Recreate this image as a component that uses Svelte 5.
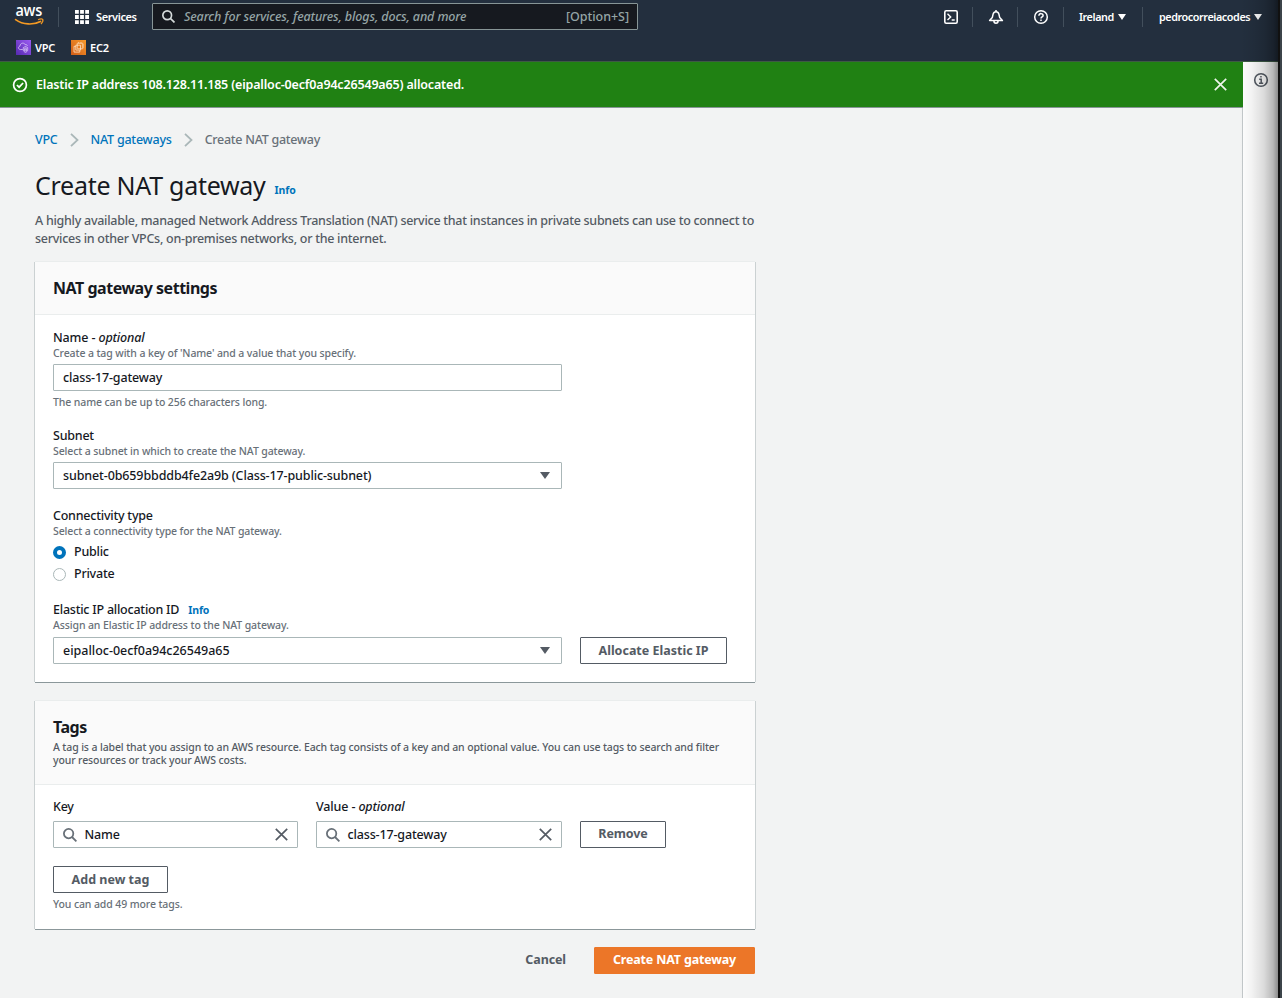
<script>
  let name = $state('class-17-gateway');
  let connectivity = $state('Public');
  const tags = [
    { id: 'key', label: 'Key', optional: false, value: 'Name' },
    { id: 'value', label: 'Value', optional: true, value: 'class-17-gateway' }
  ];
</script>

{#snippet magnifier(size)}
  <svg width={size} height={size} viewBox="0 0 14 14" fill="none" stroke="currentColor" stroke-width="1.8"><circle cx="5.6" cy="5.6" r="4.7" /><path d="M9 9 13.4 13.4" /></svg>
{/snippet}

{#snippet cross()}
  <svg width="13" height="13" viewBox="0 0 13 13" fill="none" stroke="currentColor" stroke-width="1.7"><path d="M.8.8 12.2 12.2M12.2.8.8 12.2" /></svg>
{/snippet}

<div class="page">
  <header>
    <div class="bar">
      <svg class="aws" width="30" height="22" viewBox="0 0 30 22">
        <text x="0.4" y="10.4" textLength="26.6" lengthAdjust="spacingAndGlyphs">aws</text>
        <path d="M.6 13.6C8 19 18.500 19.200 25.500 15.400" fill="none" stroke="#f59a23" stroke-width="1.700" stroke-linecap="round" />
        <path d="M23 13.700c2-.8 4-.9 4.700-.3.500.900-.2 3-1.700 4.600" fill="none" stroke="#f59a23" stroke-width="1.200" />
      </svg>
      <i class="sep first"></i>
      <svg class="grid" width="14" height="14" viewBox="0 0 14 14" fill="#fff"><path d="M0 0h3.800v3.800H0zM5.100 0h3.800v3.800H5.100zM10.200 0H14v3.800h-3.800zM0 5.100h3.800v3.800H0zM5.100 5.100h3.800v3.800H5.100zM10.200 5.100H14v3.800h-3.800zM0 10.200h3.800V14H0zM5.100 10.200h3.800V14H5.100zM10.200 10.200H14V14h-3.800z" /></svg>
      <b class="services">Services</b>
      <div class="search">
        {@render magnifier(13)}
        <em>Search for services, features, blogs, docs, and more</em>
        <span>[Option+S]</span>
      </div>
      <div class="tools">
        <svg width="16" height="16" viewBox="0 0 16 16" fill="none" stroke="#fff" stroke-width="1.600"><rect x="1.800" y="1.800" width="12.400" height="12.400" rx="1.400" /><path d="m4.500 4.700 3.200 3.200-3.200 3.200M8.700 11h3" stroke-width="1.400" /></svg>
        <i class="sep s1"></i>
        <svg width="16" height="16" viewBox="0 0 16 16" fill="none" stroke="#fff" stroke-width="1.500" stroke-linejoin="round"><path d="M1.600 11.600 4.300 8.600 5.100 5.200C5.500 3.500 6.500 2.700 8 2.700s2.500.8 2.900 2.500l.8 3.400 2.700 3zM8 2.700V.9M5.900 11.800c0 3.300 4.200 3.300 4.200 0" /></svg>
        <i class="sep s2"></i>
        <svg width="16" height="16" viewBox="0 0 16 16" fill="none" stroke="#fff" stroke-width="1.500"><circle cx="8" cy="8" r="6.300" /><path d="M5.900 6.700c0-2.900 4.300-2.600 4.200-.1C10 8 8 7.900 8 9.600M8 10.600v1.500" /></svg>
        <i class="sep s3"></i>
        <b class="region">Ireland</b><i class="caret"></i>
        <i class="sep s4"></i>
        <b class="user">pedrocorreiacodes</b><i class="caret"></i>
      </div>
    </div>
    <nav class="favorites">
      <svg width="15" height="15" viewBox="0 0 15 15"><defs><linearGradient id="violet" x1="0" y1="1" x2="1" y2="0"><stop stop-color="#5529b0" /><stop offset="1" stop-color="#9d5cf2" /></linearGradient></defs><path fill="url(#violet)" d="M0 0h15v15H0z" /><g fill="none" stroke="#e4d5fa" stroke-width=".7"><path d="M6.800 9.500H4.300C1.800 9.200 2 6.400 4 6.200c-.1-3.600 4.500-3.900 5.200-1.500 1.300-.4 2.100.2 2.100 1.300" /><path d="M7.300 7.600 9.500 6.500l2.200 1.100v2.200c0 1.300-.9 2-2.200 2.600-1.300-.6-2.200-1.300-2.200-2.600z" /><path d="M8.700 9.200V8.500q.8-1 1.600 0v.7M8.400 9.200h2.200v1.600H8.400z" /></g></svg>
      <b>VPC</b>
      <svg class="ec2" width="15" height="15" viewBox="0 0 15 15"><defs><linearGradient id="amber" x1="0" y1="1" x2="1" y2="0"><stop stop-color="#d05c17" /><stop offset="1" stop-color="#f89a2b" /></linearGradient></defs><path fill="url(#amber)" d="M0 0h15v15H0z" /><g fill="none" stroke="#ffe2c4" stroke-width=".8"><rect x="6.200" y="3.200" width="5.600" height="5.600" rx=".5" /><path d="M4.800 6.300H3v5.800h5.800v-1.800M4.800 5.200h4.700v4.900H4.800zM7.500 3.200V2.300M10 3.200V2.300M11.800 5h.9M11.800 7h.9" /></g></svg>
      <b>EC2</b>
    </nav>
  </header>

  <div class="content">
    <main>
      <div class="flash">
        <svg width="16" height="16" viewBox="0 0 16 16" fill="none" stroke="#fff" stroke-width="1.700"><circle cx="8" cy="8" r="6.400" /><path d="m4.900 8 2.200 2.200 4-4.200" /></svg>
        <b>Elastic IP address 108.128.11.185 (eipalloc-0ecf0a94c26549a65) allocated.</b>
        {@render cross()}
      </div>

      <div class="column">
        <nav class="crumbs">
          <a href="#vpc">VPC</a>
          <svg width="9" height="14" viewBox="0 0 9 14"><path d="m1 .8 6.500 6.200L1 13.200" /></svg>
          <a href="#gateways">NAT gateways</a>
          <svg width="9" height="14" viewBox="0 0 9 14"><path d="m1 .8 6.500 6.200L1 13.200" /></svg>
          <span>Create NAT gateway</span>
        </nav>
        <div class="title"><h1>Create NAT gateway</h1><a href="#info" class="info">Info</a></div>
        <p class="intro">A highly available, managed Network Address Translation (NAT) service that instances in private subnets can use to connect to<br />services in other VPCs, on-premises networks, or the internet.</p>

        <section class="card">
          <div class="head"><h2>NAT gateway settings</h2></div>
          <div class="body">
            <div class="field">
              <label for="name">Name - <em>optional</em></label>
              <small>Create a tag with a key of 'Name' and a value that you specify.</small>
              <input id="name" class="box" bind:value={name} />
              <small class="hint">The name can be up to 256 characters long.</small>
            </div>
            <div class="field">
              <div class="label">Subnet</div>
              <small>Select a subnet in which to create the NAT gateway.</small>
              <div class="box select"><span class="subnet">subnet-0b659bbddb4fe2a9b (Class-17-public-subnet)</span><i class="caret"></i></div>
            </div>
            <div class="field">
              <div class="label">Connectivity type</div>
              <small>Select a connectivity type for the NAT gateway.</small>
              <div class="radios">
                {#each ['Public', 'Private'] as option}
                  <button class="radio" class:on={connectivity === option} onclick={() => (connectivity = option)}><i></i>{option}</button>
                {/each}
              </div>
            </div>
            <div class="field eip">
              <div class="label">Elastic IP allocation ID<a href="#info" class="info">Info</a></div>
              <small>Assign an Elastic IP address to the NAT gateway.</small>
              <div class="line">
                <div class="box select"><span class="alloc">eipalloc-0ecf0a94c26549a65</span><i class="caret"></i></div>
                <button class="btn allocate">Allocate Elastic IP</button>
              </div>
            </div>
          </div>
        </section>

        <section class="card tags">
          <div class="head">
            <h2>Tags</h2>
            <p>A tag is a label that you assign to an AWS resource. Each tag consists of a key and an optional value. You can use tags to search and filter<br />your resources or track your AWS costs.</p>
          </div>
          <div class="body">
            <div class="line">
              {#each tags as tag}
                <div class="tag {tag.id}">
                  <div class="label">{tag.label}{#if tag.optional}{' - '}<em>optional</em>{/if}</div>
                  <div class="box lookup">{@render magnifier(14)}<span>{tag.value}</span>{@render cross()}</div>
                </div>
              {/each}
              <button class="btn remove">Remove</button>
            </div>
            <button class="btn add">Add new tag</button>
            <small class="hint">You can add 49 more tags.</small>
          </div>
        </section>

        <footer>
          <button class="cancel">Cancel</button>
          <button class="btn primary">Create NAT gateway</button>
        </footer>
      </div>
    </main>
    <aside>
      <svg width="16" height="16" viewBox="0 0 16 16" fill="none" stroke="#545b64" stroke-width="1.600"><circle cx="8" cy="8" r="6.300" /><path d="M6.200 7.300h2v3.900M6 11.200h4.200M7.200 4.800h1.500" stroke-width="1.500" /></svg>
    </aside>
  </div>
  <div class="edge"></div>
</div>

<style>
  :global(body) { margin: 0; }
  .page { position: relative; width: 1282px; height: 998px; overflow: hidden; display: flex; flex-direction: column; background: #f2f3f3; color: #16191f; font: 500 12.5px/18px "Noto Sans", "Open Sans", sans-serif; letter-spacing: -.23px; }
  .page * { box-sizing: border-box; }
  svg { flex: none; display: block; }
  button { font: inherit; letter-spacing: inherit; color: inherit; background: none; border: 0; padding: 0; margin: 0; text-align: left; white-space: nowrap; }
  a { color: #0073bb; text-decoration: none; }
  h1, h2, p { margin: 0; }

  header { height: 62px; flex: none; background: #232f3e; color: #fff; border-bottom: 1px solid #3d5a45; }
  .bar { height: 33px; display: flex; align-items: center; padding-left: 15px; }
  .aws { margin-top: 1px; overflow: visible; }
  .aws text { font: 600 15.5px "Open Sans", sans-serif; fill: #fff; }
  .sep { width: 1px; height: 20px; background: #424f5c; flex: none; }
  .first { margin: 0 16px 0 13px; }
  .services { width: 56px; margin-left: 7px; font-size: 11px; font-weight: 600; letter-spacing: -.4px; white-space: nowrap; }
  .search { width: 486px; height: 27px; display: flex; align-items: center; border: 1px solid #879596; background: #16191f; border-radius: 1px; padding: 0 8px 0 9px; color: #d5dbdb; }
  .search em { margin-left: 9px; color: #95a5a6; white-space: nowrap; letter-spacing: -.12px; }
  .search span { margin-left: auto; color: #95a5a6; letter-spacing: -.05px; }
  .tools { margin-left: auto; display: flex; align-items: center; width: 339px; }
  .s1, .s2 { margin: 0 15px 0 13px; }
  .s3 { margin: 0 15px 0 14px; }
  .s4 { margin: 0 16px 0 16px; }
  .tools b { font-size: 10.8px; font-weight: 600; letter-spacing: -.42px; white-space: nowrap; }
  .region { width: 34px; }
  .user { width: 90px; }
  .caret { width: 0; height: 0; border: 4px solid transparent; border-top: 6px solid #fff; border-bottom: 0; margin-left: 5px; }
  .favorites { height: 29px; display: flex; align-items: center; padding-left: 16px; font-size: 11px; }
  .favorites b { margin-left: 4px; font-weight: 600; }
  .ec2 { margin-left: 16px; }

  .content { flex: 1; display: flex; min-height: 0; }
  main { width: 1243px; border-right: 1px solid #c3c8ca; }
  .flash { width: 1243px; height: 46px; display: flex; align-items: center; background: #208113; border-bottom: 1px solid #879596; color: #fff; padding: 0 16px 0 12px; }
  .flash b { margin-left: 8px; font-weight: 600; letter-spacing: -.17px; }
  .flash svg:last-child { margin-left: auto; color: #eef5ec; }
  .column { width: 720px; margin-left: 35px; }
  .crumbs { display: flex; align-items: center; height: 18px; margin-top: 23px; color: #687078; white-space: nowrap; }
  .crumbs svg { margin: 0 12px; fill: none; stroke: #aab7b8; stroke-width: 1.8; }
  .crumbs span { letter-spacing: -.27px; }
  .title { display: flex; align-items: baseline; margin-top: 20px; height: 32px; }
  h1 { font-size: 25px; line-height: 32px; font-weight: 400; letter-spacing: -.27px; white-space: nowrap; }
  .info { font-size: 10.5px; font-weight: 700; margin-left: 9px; letter-spacing: -.1px; }
  .title .info { position: relative; top: -1px; }
  .intro { color: #545b64; margin-top: 11px; white-space: nowrap; letter-spacing: -.273px; }

  .card { margin-top: 14px; background: #fff; box-shadow: 0 1px 0 #8b979a, -1px 0 0 #cbd1d2, 1px 0 0 #cbd1d2, 0 -1px 0 #eaeded; height: 420px; }
  .head { height: 53px; padding: 15px 18px; background: #fafafa; border-bottom: 1px solid #eaeded; }
  h2 { font-size: 16px; line-height: 23px; font-weight: 700; letter-spacing: -.48px; }
  .body { padding: 14px 18px 0; }
  .field { margin-bottom: 18px; }
  label, .label { display: block; height: 18px; white-space: nowrap; }
  label, .value .label { letter-spacing: -.14px; }
  small { display: block; font-size: 10.5px; line-height: 13px; color: #687078; letter-spacing: -.11px; white-space: nowrap; }
  .box { display: flex; align-items: center; width: 509px; height: 27px; border: 1px solid #aab7b8; border-radius: 1px; background: #fff; padding: 0 9px; margin-top: 4px; font: inherit; letter-spacing: -.15px; color: inherit; white-space: nowrap; }
  .subnet { letter-spacing: -.12px; }
  .alloc { letter-spacing: -.01px; }
  .select .caret { margin-left: auto; border-width: 7px 5px 0; border-top-color: #545b64; margin-right: 2px; }
  .hint { margin-top: 5px; }
  .radios { display: flex; flex-direction: column; gap: 4px; margin-top: 5px; }
  .radio { display: flex; align-items: center; height: 18px; }
  .radio i { width: 13px; height: 13px; border: 1px solid #aab7b8; border-radius: 50%; margin-right: 8px; }
  .radio.on i { border: 4px solid #0073bb; }
  .line { display: flex; align-items: flex-end; gap: 18px; }
  .eip .box { margin-top: 5px; }
  .btn { height: 27px; border: 1px solid #545b64; border-radius: 1px; color: #545b64; font-weight: 700; text-align: center; letter-spacing: 0; }
  .allocate { width: 147px; }
  .tags { margin-top: 19px; height: 228px; }
  .tags .head { height: 84px; }
  .tags p { font-size: 10.5px; line-height: 13px; color: #545b64; margin-top: 2px; white-space: nowrap; letter-spacing: -.122px; }
  .tags .body { padding-top: 13px; }
  .key { width: 245px; }
  .value { width: 246px; }
  .lookup { width: 100%; margin-top: 5px; padding: 0 9px 0 9px; }
  .lookup svg { color: #687078; }
  .lookup svg:last-child { color: #545b64; margin-left: auto; }
  .lookup span { margin-left: 7.5px; }
  .remove { width: 86px; line-height: 23px; padding-bottom: 2px; letter-spacing: -.1px; }
  .add { width: 115px; margin-top: 18px; display: block; }
  footer { display: flex; justify-content: flex-end; align-items: center; margin-top: 18px; }
  .cancel { color: #545b64; font-weight: 700; margin-right: 28px; padding-bottom: 2px; letter-spacing: -.1px; }
  .primary { width: 161px; background: #ec7628; border-color: #ec7628; color: #fff; letter-spacing: -.17px; padding-bottom: 1px; }
  aside { flex: 1; background: #fff; padding: 10px 0 0 10px; }
  .edge { position: absolute; top: 0; right: 0; width: 42px; height: 998px; pointer-events: none; background: linear-gradient(90deg, transparent 0, rgba(0,0,0,.05) 12px, rgba(0,0,0,.14) 24px, rgba(0,0,0,.28) 33px, rgba(0,0,0,.45) 38px, #111 38px, #111 40px, #3c444a 40px); }
</style>
